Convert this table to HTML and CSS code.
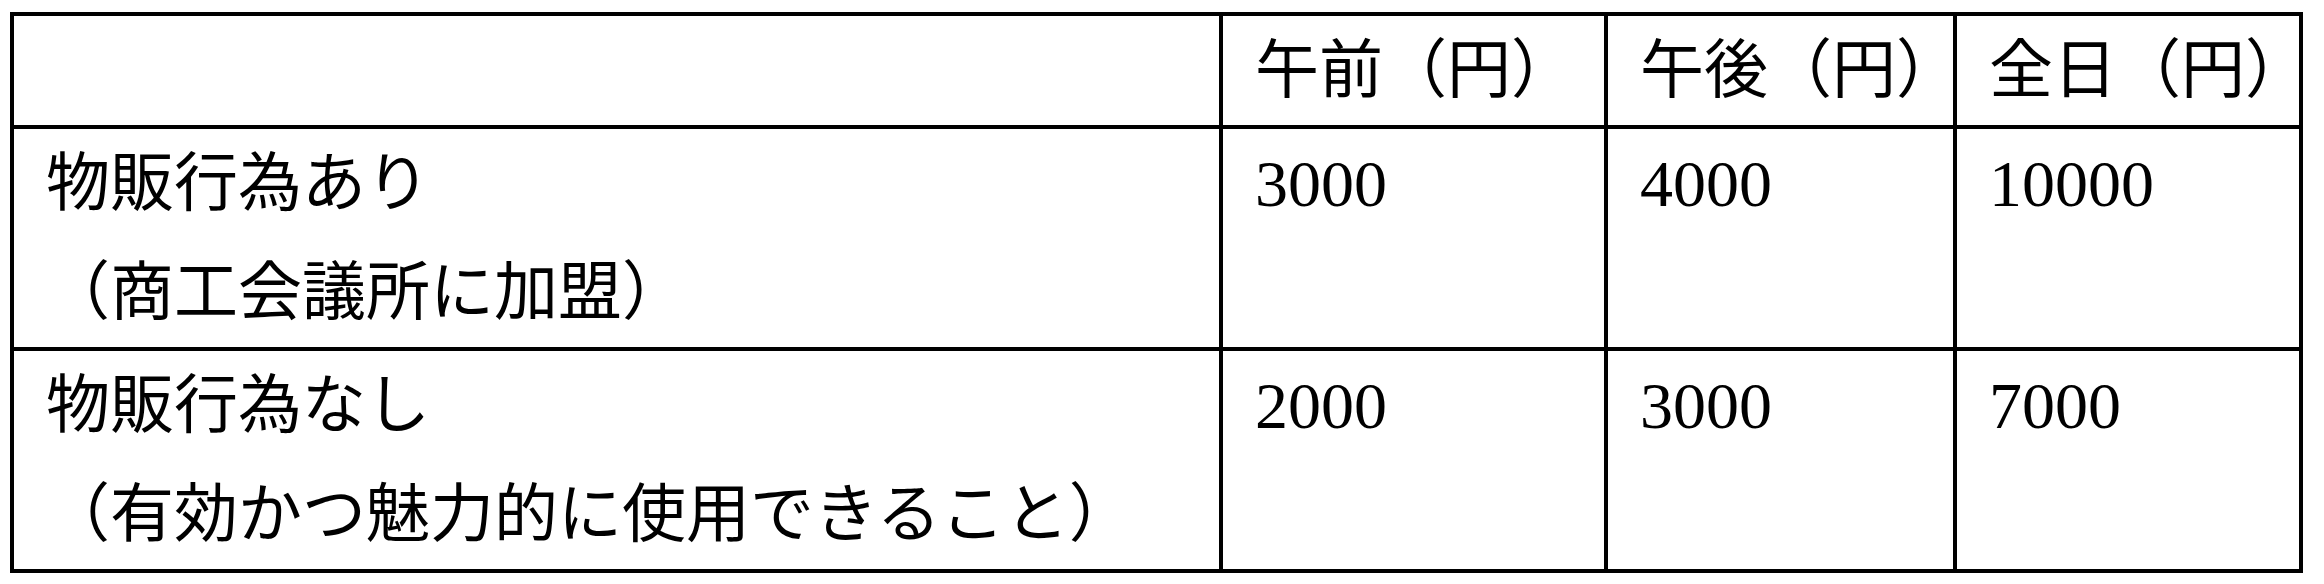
FILE: index.html
```html
<!DOCTYPE html>
<html lang="ja">
<head>
<meta charset="utf-8">
<title>料金表</title>
<link rel="stylesheet" href="styles.css">
</head>
<body>
<table class="fee-table">
  <colgroup>
    <col class="col-label">
    <col class="col-am">
    <col class="col-pm">
    <col class="col-day">
  </colgroup>
  <tr class="head-row">
    <td></td>
    <td>午前（円）</td>
    <td>午後（円）</td>
    <td>全日（円）</td>
  </tr>
  <tr class="body-row">
    <td>物販行為あり<br>（商工会議所に加盟）</td>
    <td class="num">3000</td>
    <td class="num">4000</td>
    <td class="num">10000</td>
  </tr>
  <tr class="body-row">
    <td>物販行為なし<br>（有効かつ魅力的に使用できること）</td>
    <td class="num">2000</td>
    <td class="num">3000</td>
    <td class="num">7000</td>
  </tr>
</table>
</body>
</html>
```
FILE: styles.css
```css
html, body {
  background: #ffffff;
}
body {
  margin: 0;
  padding: 12px 0 0 10px;
  font-family: "Liberation Serif", "Noto Sans CJK JP", serif;
  color: #000000;
}
.fee-table {
  border-collapse: separate;
  border-spacing: 0;
  table-layout: fixed;
  width: 2293px;
  border-left: 4px solid #000;
  border-top: 4px solid #000;
}
.col-label { width: 1209px; }
.col-am { width: 385px; }
.col-pm { width: 349px; }
.col-day { width: 346px; }
.fee-table td {
  box-sizing: border-box;
  border-right: 4px solid #000;
  border-bottom: 4px solid #000;
  padding: 0 0 0 32px;
  vertical-align: top;
  font-size: 64px;
  line-height: 109px;
  white-space: nowrap;
}
.fee-table td.num {
  font-size: 66px;
}
.head-row td {
  height: 113px;
}
.body-row td {
  height: 222px;
}
```
